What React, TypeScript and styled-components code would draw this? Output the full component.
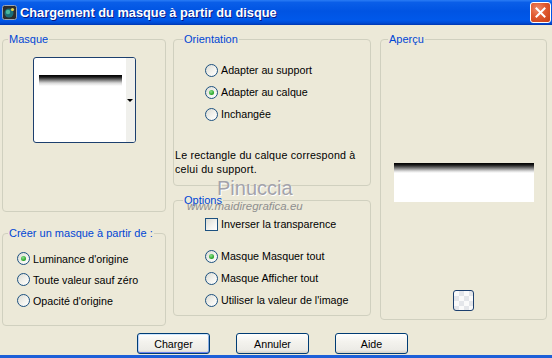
import React from 'react'
import styled, { createGlobalStyle } from 'styled-components'

const GlobalStyle = createGlobalStyle`
  html, body {
    margin: 0;
    padding: 0;
  }
  body {
    background: #ece9d8;
    font-family: 'Liberation Sans', Arial, sans-serif;
    font-size: 10.7px;
    color: #000;
  }
`

const Window = styled.div`
  position: relative;
  width: 552px;
  height: 358px;
  display: flex;
  flex-direction: column;
  overflow: hidden;
  background: #ece9d8;
`

const TitleBar = styled.div`
  height: 25px;
  flex: none;
  display: flex;
  align-items: center;
  padding: 0 1px 0 2px;
  box-sizing: border-box;
  background: linear-gradient(
    to bottom,
    #2a7cf5 0%,
    #0a5ee8 10%,
    #0054e3 45%,
    #0058ea 80%,
    #004bd4 92%,
    #0036b0 100%
  );
`

const Title = styled.span`
  flex: 1;
  margin-left: 3px;
  color: #fff;
  font-weight: bold;
  font-size: 12.8px;
  text-shadow: 1px 1px 0 #0a1883;
  white-space: nowrap;
`

const CloseButton = styled.div`
  width: 21px;
  height: 21px;
  box-sizing: border-box;
  border: 1px solid #fff;
  border-radius: 3px;
  display: flex;
  align-items: center;
  justify-content: center;
  background: radial-gradient(circle at 35% 30%, #f08a6a 0%, #e0592f 45%, #c73d14 100%);
`

const Panels = styled.div`
  display: flex;
  padding: 14px 0 0 2px;
`

const Column = styled.div<{ $width: number; $gap?: number }>`
  width: ${(p) => p.$width}px;
  margin-left: ${(p) => p.$gap ?? 0}px;
  display: flex;
  flex-direction: column;
`

const Group = styled.div<{ $height: number; $top?: number }>`
  position: relative;
  height: ${(p) => p.$height}px;
  margin-top: ${(p) => p.$top ?? 0}px;
  box-sizing: border-box;
  border: 1px solid #d0d0bf;
  border-radius: 4px;
  display: flex;
  flex-direction: column;
`

const Legend = styled.span<{ $left: number }>`
  position: absolute;
  top: -7px;
  left: ${(p) => p.$left}px;
  padding: 0 1px;
  line-height: 13px;
  font-size: 11px;
  color: #0046d5;
  background: #ece9d8;
  white-space: nowrap;
`

const ThumbArea = styled.div`
  display: flex;
  justify-content: center;
  padding-top: 17px;
`

const Thumb = styled.div`
  width: 103px;
  height: 86px;
  box-sizing: border-box;
  border: 1px solid #1c3f6e;
  border-radius: 3px;
  background: #fff;
  display: flex;
  overflow: hidden;
`

const ThumbImage = styled.div`
  flex: 1;
  padding: 17px 4px 0 5px;
`

const GradientBar = styled.div<{ $height: number }>`
  height: ${(p) => p.$height}px;
  background: linear-gradient(
    to bottom,
    #000 0px,
    #1a1a1a 2px,
    #777 5px,
    #d8d8d8 8px,
    #fff 11px,
    #fff 100%
  );
`

const ThumbStrip = styled.div`
  width: 9px;
  background: #f0f0ec;
  display: flex;
  align-items: center;
  justify-content: center;
`

const DropArrow = styled.span`
  width: 0;
  height: 0;
  border-left: 3px solid transparent;
  border-right: 3px solid transparent;
  border-top: 3px solid #000;
`

const OptionList = styled.div<{ $top: number; $left: number }>`
  display: flex;
  flex-direction: column;
  padding: ${(p) => p.$top}px 0 0 ${(p) => p.$left}px;
`

const OptionRow = styled.div<{ $height: number }>`
  height: ${(p) => p.$height}px;
  display: flex;
  align-items: center;
  gap: 3px;
  white-space: nowrap;
`

const RadioDot = styled.span<{ $checked?: boolean }>`
  position: relative;
  width: 13px;
  height: 13px;
  flex: none;
  box-sizing: border-box;
  border: 1px solid #1c5180;
  border-radius: 50%;
  background: linear-gradient(135deg, #dcdcd4 0%, #f4f4f0 60%, #fff 100%);

  &::after {
    content: '';
    display: ${(p) => (p.$checked ? 'block' : 'none')};
    position: absolute;
    left: 3px;
    top: 3px;
    width: 5px;
    height: 5px;
    border-radius: 50%;
    background: radial-gradient(circle at 40% 35%, #8fe08f 0%, #21a121 70%, #1a801a 100%);
  }
`

const CheckBox = styled.span`
  width: 13px;
  height: 13px;
  flex: none;
  box-sizing: border-box;
  border: 1px solid #1c5180;
  background: linear-gradient(135deg, #dcdcd4 0%, #f4f4f0 60%, #fff 100%);
`

const Spacer = styled.div<{ $height: number }>`
  height: ${(p) => p.$height}px;
`

const Note = styled.p`
  margin: 23px 0 0 1px;
  line-height: 14px;
  letter-spacing: 0.2px;
  white-space: nowrap;
`

const PreviewArea = styled.div`
  flex: 1;
  display: flex;
  flex-direction: column;
  align-items: center;
  padding: 123px 0 8px;
`

const Preview = styled.div`
  width: 140px;
  height: 39px;
  background: linear-gradient(
    to bottom,
    #000 0px,
    #1a1a1a 2px,
    #777 5px,
    #d8d8d8 8px,
    #fff 10px,
    #fff 100%
  );
`

const SquareButton = styled.div`
  margin-top: auto;
  width: 21px;
  height: 21px;
  box-sizing: border-box;
  border: 1px solid #1c3f6e;
  border-radius: 3px;
  background-color: #fafafa;
  background-image: linear-gradient(45deg, #e4e6ea 25%, transparent 25%, transparent 75%, #e4e6ea 75%),
    linear-gradient(45deg, #e4e6ea 25%, transparent 25%, transparent 75%, #e4e6ea 75%);
  background-size: 10px 10px;
  background-position: 0 0, 5px 5px;
`

const ButtonBar = styled.div`
  margin-top: auto;
  display: flex;
  gap: 26px;
  padding: 0 0 1px 137px;
`

const Button = styled.button<{ $default?: boolean }>`
  width: 73px;
  height: 21px;
  padding: 0;
  border: 1px solid #003c74;
  border-radius: 3px;
  font-family: 'Liberation Sans', Arial, sans-serif;
  font-size: 10.7px;
  color: #000;
  background: linear-gradient(to bottom, #ffffff 0%, #f4f3ee 40%, #ecebe6 85%, #d6d0c5 100%);
  box-shadow: ${(p) =>
    p.$default
      ? 'inset 0 1px 0 #cee7ff, inset 0 -1px 0 #6982ee, inset 1px 0 0 #b8d2fc, inset -1px 0 0 #89ade4'
      : 'none'};
`

const BottomEdge = styled.div`
  height: 3px;
  flex: none;
  background: #1d5fd8;
`

const Watermark = styled.div`
  position: absolute;
  left: 187px;
  top: 178px;
  display: flex;
  flex-direction: column;
  pointer-events: none;
`

const Brand = styled.span`
  margin-left: 30px;
  font-size: 20px;
  line-height: 20px;
  color: #a3a3ab;
  text-shadow: 1px 1px 0 #fff;
`

const Site = styled.span`
  margin-top: 2px;
  font-size: 11.5px;
  line-height: 12px;
  font-style: italic;
  color: #8f8f8f;
`

function AppIcon() {
  return (
    <svg width="15" height="15" viewBox="0 0 15 15">
      <rect x="0.5" y="0.5" width="14" height="14" rx="2" fill="#2c2c2c" stroke="#9aa4b4" />
      <circle cx="7" cy="8" r="4.5" fill="#1b6f7a" />
      <circle cx="6" cy="7" r="2.2" fill="#49b7a0" />
      <circle cx="10.5" cy="4.5" r="1.6" fill="#e8d24a" />
    </svg>
  )
}

function CloseIcon() {
  return (
    <svg width="11" height="11" viewBox="0 0 11 11">
      <path d="M1.5 1.5 L9.5 9.5 M9.5 1.5 L1.5 9.5" stroke="#fff" strokeWidth="2" strokeLinecap="square" />
    </svg>
  )
}

function Radio({ label, checked, height }: { label: string; checked?: boolean; height: number }) {
  return (
    <OptionRow $height={height}>
      <RadioDot $checked={checked} />
      <span>{label}</span>
    </OptionRow>
  )
}

export default function App() {
  return (
    <Window>
      <GlobalStyle />
      <TitleBar>
        <AppIcon />
        <Title>Chargement du masque à partir du disque</Title>
        <CloseButton>
          <CloseIcon />
        </CloseButton>
      </TitleBar>

      <Panels>
        <Column $width={164}>
          <Group $height={173}>
            <Legend $left={5}>Masque</Legend>
            <ThumbArea>
              <Thumb>
                <ThumbImage>
                  <GradientBar $height={11} />
                </ThumbImage>
                <ThumbStrip>
                  <DropArrow />
                </ThumbStrip>
              </Thumb>
            </ThumbArea>
          </Group>
          <Group $height={93} $top={21}>
            <Legend $left={5}>Créer un masque à partir de :</Legend>
            <OptionList $top={14} $left={14}>
              <Radio label="Luminance d'origine" checked height={21} />
              <Radio label="Toute valeur sauf zéro" height={21} />
              <Radio label="Opacité d'origine" height={21} />
            </OptionList>
          </Group>
        </Column>

        <Column $width={198} $gap={7}>
          <Group $height={147}>
            <Legend $left={9}>Orientation</Legend>
            <OptionList $top={19} $left={31}>
              <Radio label="Adapter au support" height={22} />
              <Radio label="Adapter au calque" checked height={22} />
              <Radio label="Inchangée" height={22} />
            </OptionList>
            <Note>
              Le rectangle du calque correspond à
              <br />
              celui du support.
            </Note>
          </Group>
          <Group $height={116} $top={14}>
            <Legend $left={9}>Options</Legend>
            <OptionList $top={12} $left={31}>
              <OptionRow $height={22}>
                <CheckBox />
                <span>Inverser la transparence</span>
              </OptionRow>
              <Spacer $height={10} />
              <Radio label="Masque Masquer tout" checked height={22} />
              <Radio label="Masque Afficher tout" height={22} />
              <Radio label="Utiliser la valeur de l'image" height={22} />
            </OptionList>
          </Group>
        </Column>

        <Column $width={167} $gap={9}>
          <Group $height={281}>
            <Legend $left={7}>Aperçu</Legend>
            <PreviewArea>
              <Preview />
              <SquareButton />
            </PreviewArea>
          </Group>
        </Column>
      </Panels>

      <ButtonBar>
        <Button $default>Charger</Button>
        <Button>Annuler</Button>
        <Button>Aide</Button>
      </ButtonBar>
      <BottomEdge />

      <Watermark>
        <Brand>Pinuccia</Brand>
        <Site>www.maidiregrafica.eu</Site>
      </Watermark>
    </Window>
  )
}
